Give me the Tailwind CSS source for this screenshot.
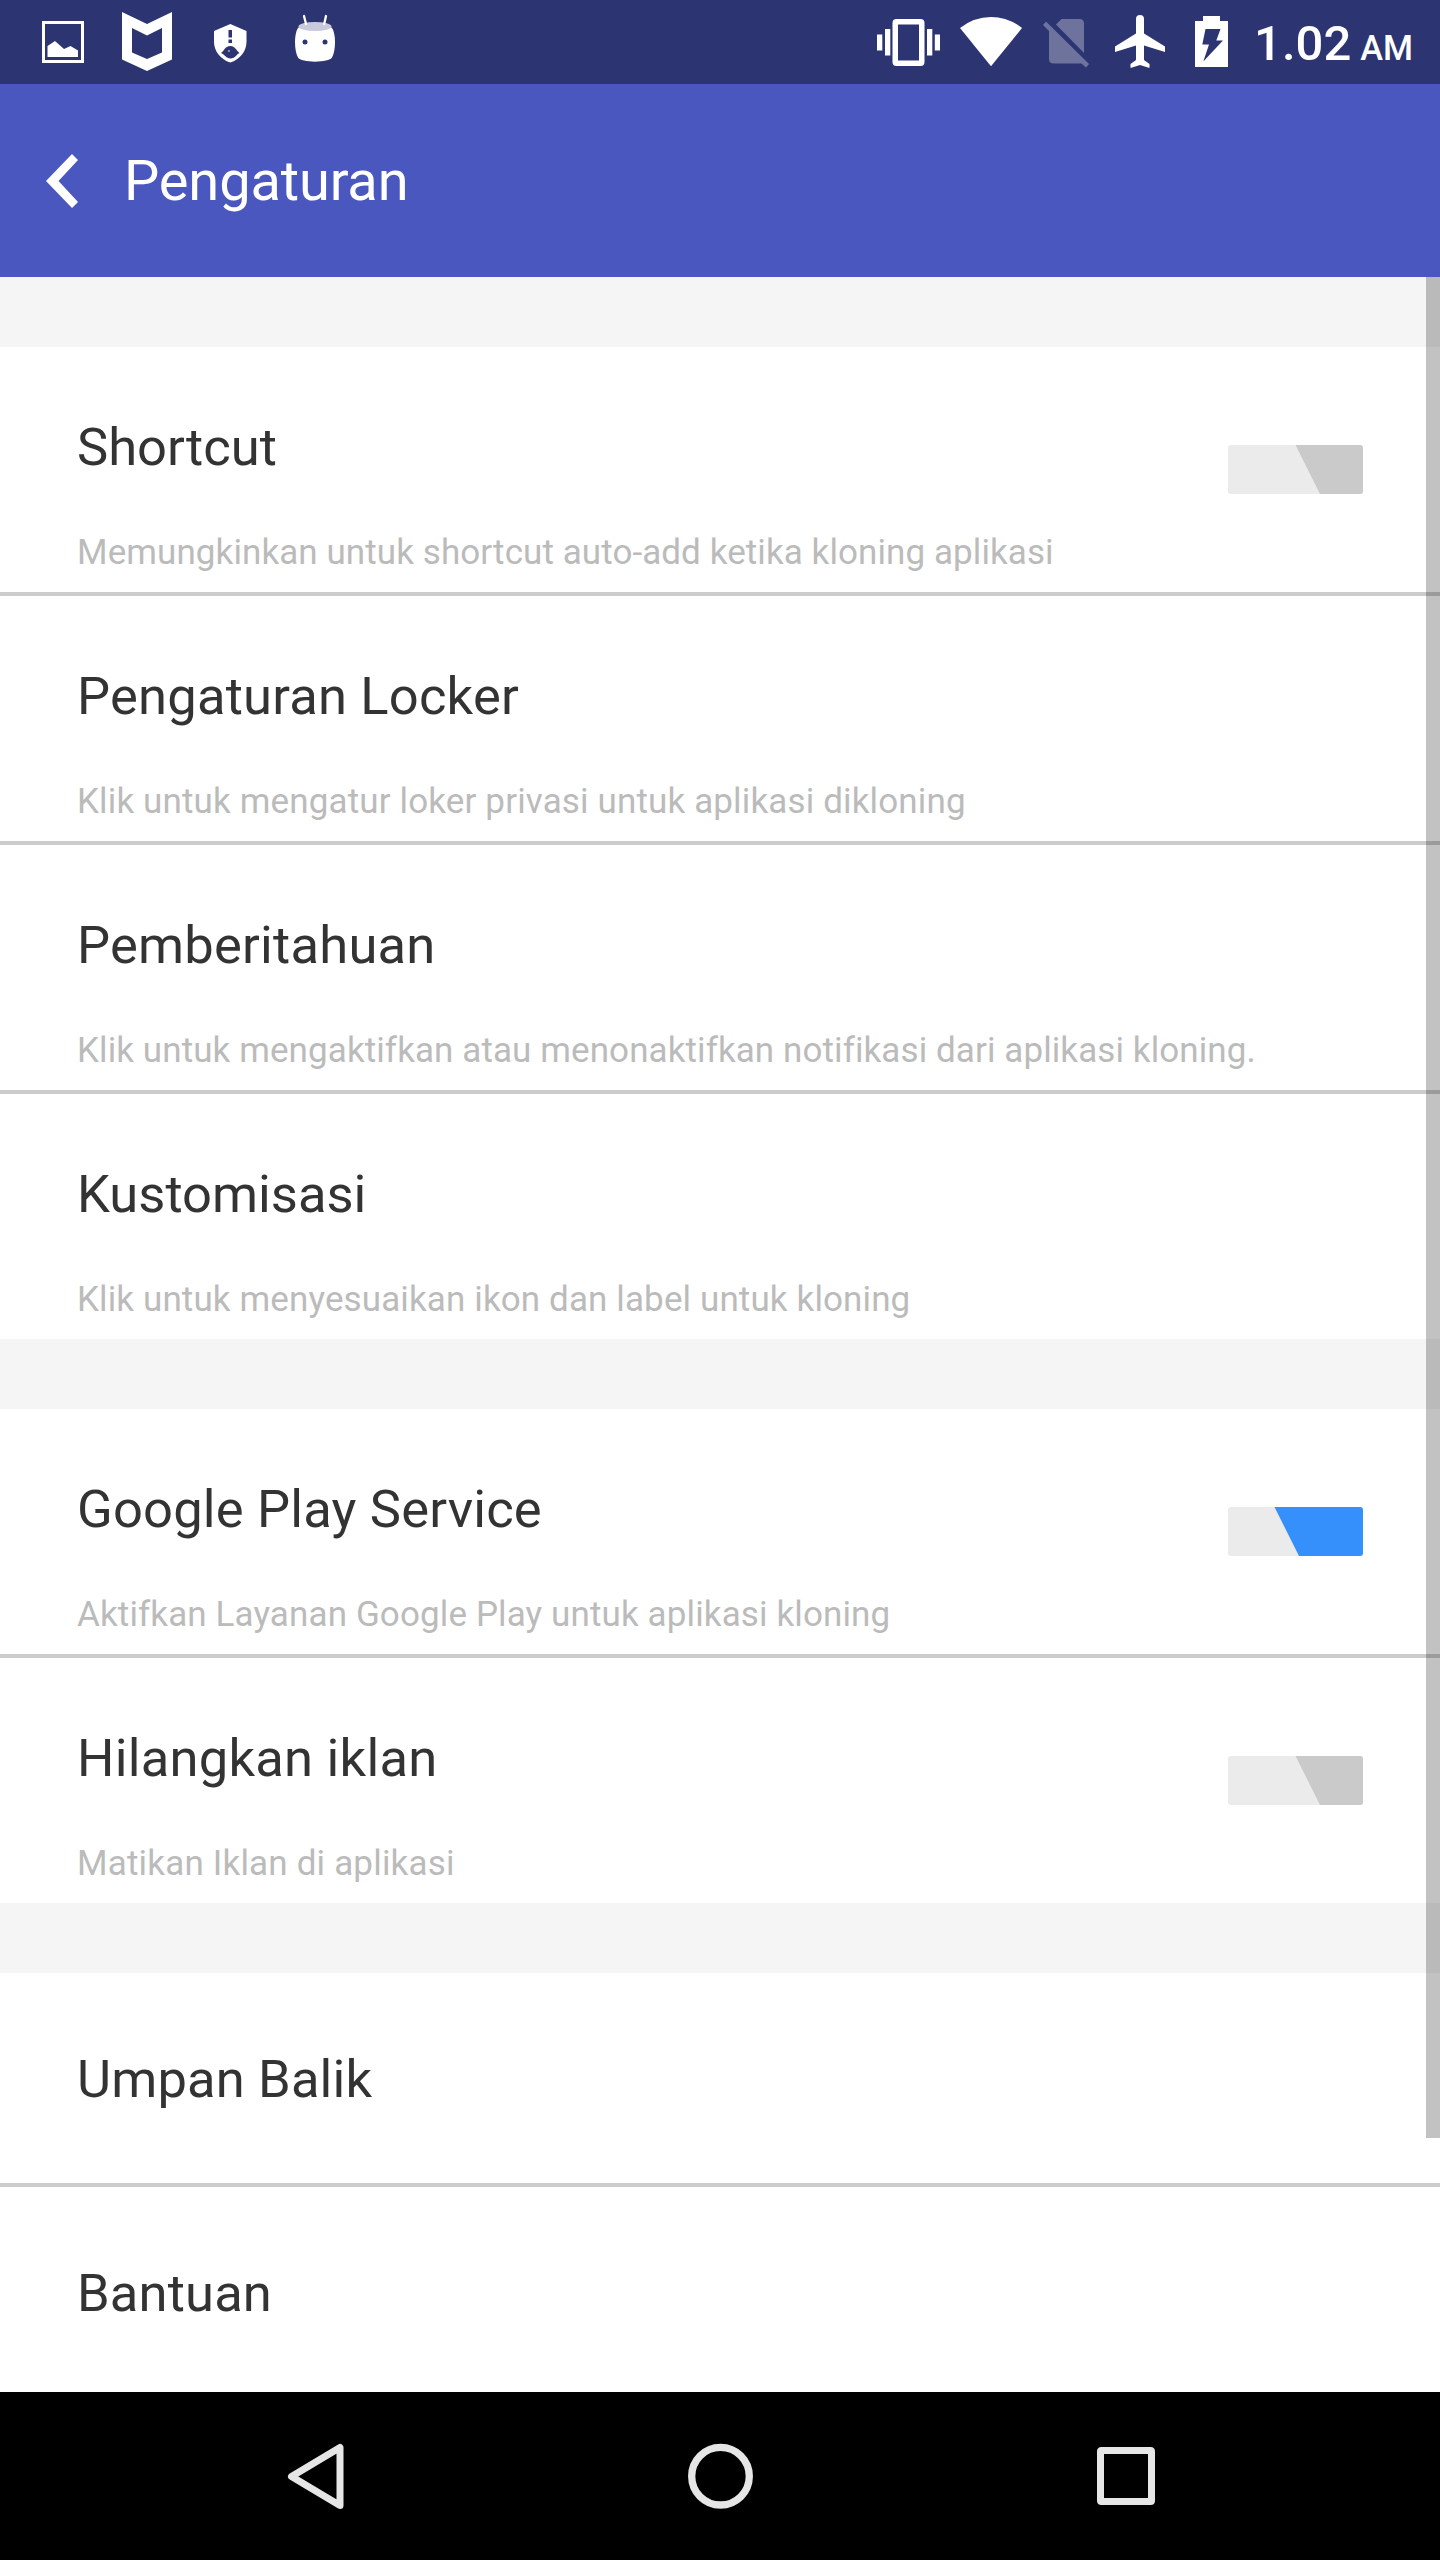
<!DOCTYPE html>
<html lang="id">
<head>
<meta charset="utf-8">
<title>Pengaturan</title>
<script src="https://cdn.jsdelivr.net/npm/@tailwindcss/browser@4"></script>
</head>
<body class="w-[1440px] h-[2560px] overflow-hidden flex flex-col bg-white font-[Roboto,sans-serif] text-[#333]">

<div class="h-[84px] shrink-0 bg-[#2c3571] text-white flex items-start justify-between pl-[42px] pr-[27px]">
  <div class="flex h-[84px]">
    <svg class="w-[42px] h-[84px]" viewBox="42 0 42 84" fill="#fff"><path fill-rule="evenodd" d="M42 21H84V63H42ZM45 24V60H81V24Z"/><path d="M47.500 57V46L55 41L64 49L70.500 46L78 50.500V57Z"/></svg>
    <svg class="w-[50px] h-[84px] ml-[38px]" viewBox="122 0 50 84" fill="#fff"><path fill-rule="evenodd" d="M122 12L147 24L172 12V59.500L147 71L122 59.500ZM132 28V52.500L147 59L162 52.500V28L147 35.500Z"/></svg>
    <svg class="w-[33px] h-[84px] ml-[42px]" viewBox="214 0 33 84"><path fill="#fff" d="M230.300 24L246.500 31V42C246.500 51 240 59.500 230.300 62.500C220.500 59.500 214 51 214 42V31Z"/><path fill="#2c3571" d="M228.500 30H232V37.500H228.500ZM228.500 39.500H232V43H228.500ZM221 53C224 51.500 224.500 46 230.500 46C235 46 236 50 239.500 53C236.500 54 235.500 58.500 230.500 58.500C226 58.500 225 54.500 221 53Z"/><circle cx="229" cy="51" r="1" fill="#aab"/></svg>
    <svg class="w-[40px] h-[84px] ml-[48px]" viewBox="295 0 40 84"><path fill="#fff" d="M298 28C303 24 327 24 332 28C334 31 335 36 335 42C335 48 334 54 332 57.500C329 63 301 63 298 57.500C296 54 295 48 295 42C295 36 296 31 298 28Z"/><ellipse cx="315" cy="26.500" rx="16.500" ry="4.500" fill="#c9c9dc"/><path d="M304 16L306 24M326 16L324.200 24" stroke="#fff" stroke-width="2.300" stroke-linecap="round"/><g fill="#2c3571"><circle cx="305" cy="42" r="2.500"/><circle cx="325" cy="42" r="2.500"/></g></svg>
  </div>
  <div class="flex h-[84px]">
    <svg class="w-[63px] h-[84px]" viewBox="877 0 63 84" fill="#fff"><path d="M877 34.500H882.300V50.500H877ZM885 29H890.300V55.500H885ZM927 29H932.300V55.500H927ZM934.800 34.500H940V50.500H934.800Z"/><path fill-rule="evenodd" d="M896.500 19H920.500Q924.500 19 924.500 23V62Q924.500 66 920.500 66H896.500Q892.500 66 892.500 62V23Q892.500 19 896.500 19ZM898 24.500V60.500H919V24.500Z"/></svg>
    <svg class="w-[62px] h-[84px] ml-[20px]" viewBox="960 0 62 84" fill="#fff"><path d="M960 28Q974 17 991 17Q1008 17 1022 28L991 66.300Z"/></svg>
    <svg class="w-[46px] h-[84px] ml-[21px]" viewBox="1043 0 46 84" fill="#6d739d"><path d="M1061.500 19H1079.500Q1084 19 1084 23.500V53L1056 24.500Z"/><path d="M1043 25L1046 21.500L1089 64L1086 67.500L1081.500 63.500H1054Q1049 63.500 1049 59V31Z"/></svg>
    <svg class="w-[50px] h-[84px] ml-[26px]" viewBox="1115 0 50 84" fill="#fff"><path d="M1136 19Q1136 15 1140 15Q1144 15 1144 19V33.500L1165 46.500V52L1144 45.500V60L1149.500 64V68L1140 65L1130.500 68V64L1136 60V45.500L1115 52V46.500L1136 33.500Z"/></svg>
    <svg class="w-[33px] h-[84px] ml-[30px]" viewBox="1195 0 33 84"><path fill="#fff" d="M1203 16H1220V21H1228V67H1195V21H1203Z"/><path fill="#2c3571" d="M1205.500 29H1220.500L1216.300 40.500H1223L1203.300 61.500L1209 44.500H1202.300Z"/></svg>
    <div class="ml-[26px] pt-[15px] font-medium text-[49px] leading-[58px] whitespace-nowrap">1.02<span class="text-[34.300px] ml-[9px]">AM</span></div>
  </div>
</div>

<header class="h-[193px] shrink-0 bg-[#4a57bf] text-white flex items-center pl-[46px]">
  <svg class="w-[32px] h-[54px]" viewBox="0 0 32 54" fill="#fff"><path d="M26 0L32 6L12.500 27L32 48L26 54L0 27Z"/></svg>
  <h1 class="text-[56px] leading-[66px] ml-[46px] tracking-[-0.15px]">Pengaturan</h1>
</header>

<main class="h-[2115px] shrink-0 relative overflow-hidden">
  <div class="h-[70px] bg-[#f5f5f5]"></div>
  <section class="divide-y-4 divide-[#ccc]">
    <div class="flex items-center justify-between pl-[77px] pr-[77px]">
      <div class="pt-[69px] pb-[19px]"><h2 class="text-[52.500px] leading-[62px]">Shortcut</h2><p class="mt-[54px] text-[35px] leading-[41px] text-[#bbb] tracking-[0.08px]">Memungkinkan untuk shortcut auto-add ketika kloning aplikasi</p></div>
      <svg class="w-[135px] h-[49px] rounded-[3px]" viewBox="0 0 135 49"><path fill="#ebebeb" d="M0 0H135V49H0Z"/><path fill="#cacaca" d="M67.500 0H135V49H92Z"/></svg>
    </div>
    <div class="pl-[77px] pt-[69px] pb-[19px]"><h2 class="text-[52.500px] leading-[62px] tracking-[0.2px]">Pengaturan Locker</h2><p class="mt-[54px] text-[35px] leading-[41px] text-[#bbb] tracking-[0.14px]">Klik untuk mengatur loker privasi untuk aplikasi dikloning</p></div>
    <div class="pl-[77px] pt-[69px] pb-[19px]"><h2 class="text-[52.500px] leading-[62px] tracking-[0.22px]">Pemberitahuan</h2><p class="mt-[54px] text-[35px] leading-[41px] text-[#bbb] tracking-[0.09px]">Klik untuk mengaktifkan atau menonaktifkan notifikasi dari aplikasi kloning.</p></div>
    <div class="pl-[77px] pt-[69px] pb-[19px]"><h2 class="text-[52.500px] leading-[62px]">Kustomisasi</h2><p class="mt-[54px] text-[35px] leading-[41px] text-[#bbb] tracking-[0.12px]">Klik untuk menyesuaikan ikon dan label untuk kloning</p></div>
  </section>
  <div class="h-[70px] bg-[#f5f5f5]"></div>
  <section class="divide-y-4 divide-[#ccc]">
    <div class="flex items-center justify-between pl-[77px] pr-[77px]">
      <div class="pt-[69px] pb-[19px]"><h2 class="text-[52.500px] leading-[62px] tracking-[0.18px]">Google Play Service</h2><p class="mt-[54px] text-[35px] leading-[41px] text-[#bbb] tracking-[0.12px]">Aktifkan Layanan Google Play untuk aplikasi kloning</p></div>
      <svg class="w-[135px] h-[49px] rounded-[3px]" viewBox="0 0 135 49"><path fill="#ebebeb" d="M0 0H135V49H0Z"/><path fill="#3590fc" d="M46.500 0H135V49H71Z"/></svg>
    </div>
    <div class="flex items-center justify-between pl-[77px] pr-[77px]">
      <div class="pt-[69px] pb-[19px]"><h2 class="text-[52.500px] leading-[62px] tracking-[0.24px]">Hilangkan iklan</h2><p class="mt-[54px] text-[35px] leading-[41px] text-[#bbb] tracking-[0.18px]">Matikan Iklan di aplikasi</p></div>
      <svg class="w-[135px] h-[49px] rounded-[3px]" viewBox="0 0 135 49"><path fill="#ebebeb" d="M0 0H135V49H0Z"/><path fill="#cacaca" d="M67.500 0H135V49H92Z"/></svg>
    </div>
  </section>
  <div class="h-[70px] bg-[#f5f5f5]"></div>
  <section class="divide-y-4 divide-[#ccc]">
    <div class="h-[214px] flex items-center pl-[77px] pt-[2px]"><h2 class="text-[52.500px] leading-[62px] tracking-[0.15px]">Umpan Balik</h2></div>
    <div class="h-[214px] flex items-center pl-[77px] pb-[2px]"><h2 class="text-[52.500px] leading-[62px] tracking-[0.15px]">Bantuan</h2></div>
  </section>
  <div class="absolute top-0 right-0 w-[14px] h-[1861px] bg-black/24"></div>
</main>

<nav class="h-[168px] shrink-0 bg-black flex items-center justify-between pl-[287px] pr-[284px]">
  <svg class="w-[57px] h-[66px]" viewBox="0 0 57 66" fill="none"><path d="M53 4.500V62.500L4.500 33.500Z" stroke="#e6e6e6" stroke-width="7" stroke-linejoin="round"/></svg>
  <svg class="w-[66px] h-[66px]" viewBox="0 0 66 66" fill="none"><circle cx="33.500" cy="33.200" r="28.800" stroke="#e6e6e6" stroke-width="7.300"/></svg>
  <svg class="w-[60px] h-[60px]" viewBox="0 0 60 60" fill="none"><path d="M5.500 1H54.500Q59 1 59 5.500V54.500Q59 59 54.500 59H5.500Q1 59 1 54.500V5.500Q1 1 5.500 1ZM8 8V52H52V8Z" fill="#e6e6e6" fill-rule="evenodd"/></svg>
</nav>
</body>
</html>
